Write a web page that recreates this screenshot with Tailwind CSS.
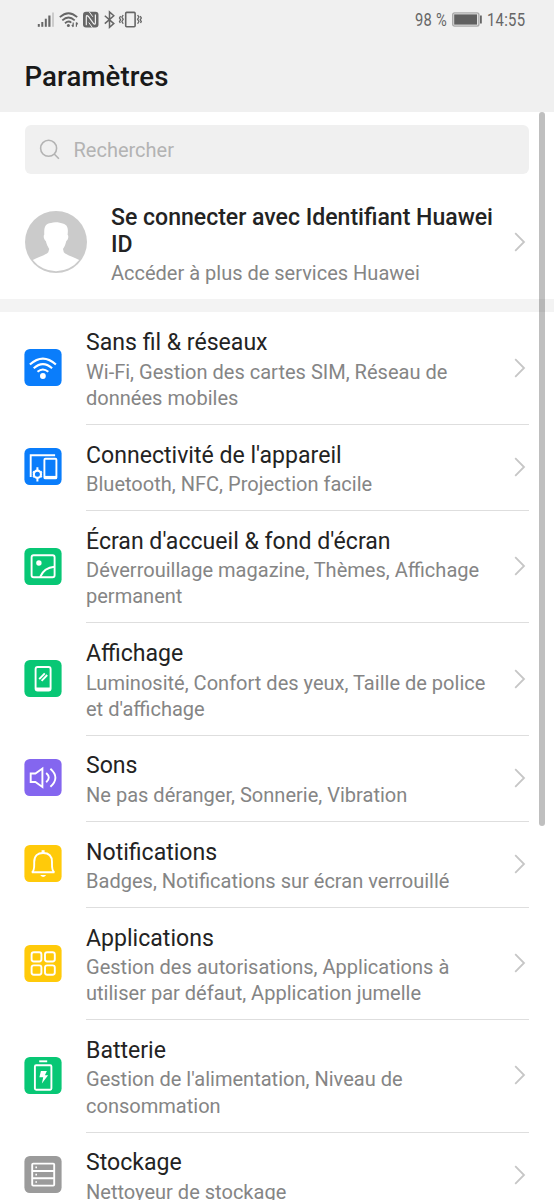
<!DOCTYPE html>
<html lang="fr">
<head>
<meta charset="utf-8">
<title>Paramètres</title>
<script src="https://cdn.jsdelivr.net/npm/@tailwindcss/browser@4"></script>
</head>
<body class="bg-white">
<svg class="hidden"><defs><symbol id="chev" viewBox="0 0 12 20"><path d="M1.2 1.2 10 10 1.2 18.8" fill="none" stroke="#c6c6c6" stroke-width="1.8"/></symbol></defs></svg>
<div class="relative flex h-[1200px] w-[554px] flex-col overflow-hidden bg-white font-[Roboto,sans-serif] text-[#232323]">
  <header class="h-[112px] shrink-0 bg-[#f0f0f0]">
    <div class="flex h-[39px] items-center justify-between pr-[29px] pl-[37px] text-[#666]">
      <svg class="h-[20px] w-[106px]" viewBox="0 0 106 20" fill="none" stroke="#666">
        <g fill="#666" stroke="none"><rect x="0.8" y="14" width="2" height="2.8"/><rect x="4.3" y="12" width="2" height="4.8"/><rect x="7.8" y="8.7" width="2" height="8.1"/><rect x="11.3" y="5.5" width="2.2" height="11.3"/><rect x="15" y="2.5" width="2" height="14.3" fill="#ccc"/></g>
        <g stroke-width="1.8"><path d="M22.8 7.2Q31.5 -.8 40.2 7.2M25.3 10.3Q31.5 4.7 37.7 10.3M28 13.2Q31.5 10.2 34.3 12.6"/></g>
        <circle cx="31.4" cy="15.6" r="1.5" fill="#666" stroke="none"/>
        <path d="M36.2 12.4v4.4M34.9 14.9l1.3 1.9M39.4 16.8v-4.4M40.7 14.3l-1.3-1.9" stroke-width="1.2"/>
        <rect x="46" y="1.8" width="15.5" height="15.8" rx="3" fill="#666" stroke="none"/>
        <path d="M49.3 15.2V7q0-2.5 2.1-.5l5.2 7q1.8 1.7 1.8-.8V4.6" stroke="#f0f0f0" stroke-width="1.2"/>
        <path d="M52.2 1.8l3.6 5M55.4 17.6l-3.6-5" stroke="#f0f0f0" stroke-width="1"/>
        <path d="M67.8 5.8 76.8 13.6 72.5 17.3V1.9L76.8 5.8 67.8 13.6" stroke-width="1.5"/>
        <rect x="88.7" y="2.4" width="9.4" height="14.4" rx="1" stroke-width="1.6"/>
        <path d="M86.2 5 84.9 7.1 86.2 9.3 84.9 11.5 86.2 13.8M100.6 5l1.3 2.1-1.3 2.2 1.3 2.2-1.3 2.3M83.6 6.2l-1.1 1.8 1.1 1.8-1.1 1.8.8 1.4M103.2 6.2l1.1 1.8-1.1 1.8 1.1 1.8-.8 1.4" stroke-width="1.3"/>
      </svg>
      <div class="flex items-center text-[17.5px] leading-5">
        <span id="pct" class="inline-block w-[33px] origin-left scale-x-[.84] whitespace-nowrap tracking-[0.3px]">98 %</span>
        <svg class="ml-[4px] h-[15px] w-[31px]" viewBox="0 0 31 15"><rect x=".7" y=".9" width="26.2" height="13.2" rx="1.8" fill="#e0e0e0" stroke="#aaa" stroke-width="1.4"/><rect x="2.2" y="2.4" width="22.8" height="10.2" fill="#606060"/><rect x="28" y="3.5" width="1.8" height="8" fill="#666"/></svg>
        <span id="clk" class="ml-[4px] inline-block w-[38px] origin-left scale-x-[.85] whitespace-nowrap tracking-[0.3px]">14:55</span>
      </div>
    </div>
    <h1 class="pt-[20px] pl-[24.5px] text-[27.6px] leading-9 font-medium tracking-[0.1px] text-[#191919]"><span>Paramètres</span></h1>
  </header>
  <div class="h-[187px] shrink-0 pr-[25px] pl-[24.5px] pt-[12.5px]">
    <div class="flex h-[49px] items-center rounded-[6px] bg-[#f0f0f0] pl-[14px] text-[20px] text-[#b3b3b3]">
      <svg class="mr-[14px] h-[21px] w-[21px]" viewBox="0 0 21 21" fill="none" stroke="#b3b3b3" stroke-width="1.6"><circle cx="9.6" cy="9.3" r="8"/><path d="m15.2 15 4.7 4.7"/></svg>
      <span class="pt-[1px]">Rechercher</span>
    </div>
    <div class="flex h-[125px] items-center pt-[12px]">
      <svg class="h-[62px] w-[62px] shrink-0" viewBox="0 0 62 62"><circle cx="31" cy="31" r="31" fill="#cbcbcb"/><path d="M7.8 49C14 45.5 20 44.5 23.3 41.2L24.2 38C23 36 21.5 33 20.8 30 19 29 18 25 19.3 23.6 18.8 16 20.5 12.5 26 12 29 10.7 35 11.2 38.5 12.8 43 14.5 43.3 18 42.6 23.8 44 25 43.2 29 41.3 30 40.6 33 39.5 36 38 38L38.8 41.2C42 44.5 48 45.5 54.2 49A29.6 29.6 0 0 1 7.8 49Z" fill="#fff"/></svg>
      <div class="ml-[24.5px] flex-1 pt-[6px]">
        <div class="text-[23.05px] leading-[27px] font-medium whitespace-nowrap"><span>Se connecter avec Identifiant Huawei</span><br>ID</div>
        <div class="pt-[2px] text-[20px] leading-[26px] text-[#858585]"><span>Accéder à plus de services Huawei</span></div>
      </div>
      <svg class="mr-[3px] h-[20px] w-[12px]"><use href="#chev"/></svg>
    </div>
  </div>
  <div class="h-[13px] shrink-0 bg-[#f3f3f3]"></div>
  <main id="list" class="shrink-0 pt-[0.6px] pr-[25px] pl-[24px]"></main>
  <div class="absolute top-[112px] left-[539px] h-[714px] w-[6px] rounded-full bg-black/25"></div>
</div>
<script>
const rows = [
  ['#0a7dfb', "Sans fil & réseaux", ["Wi-Fi, Gestion des cartes SIM, Réseau de", "données mobiles"],
   '<path d="M5.5 15.6Q18.5 3.6 31.5 15.6M9.3 19.2Q18.5 11 27.7 19.2M13.1 22.8Q18.5 18.2 23.9 22.8" stroke-width="2.1"/><circle cx="18.5" cy="27" r="2.9" fill="#fff" stroke="none"/>'],
  ['#0a7dfb', "Connectivité de l'appareil", ["Bluetooth, NFC, Projection facile"],
   '<path d="M6.3 29V7.2h24.4"/><rect x="20" y="10.8" width="12" height="19.6" rx="1"/><path d="M20 29.4h12" stroke-width="3"/><circle cx="13" cy="26.3" r="3.6" stroke-width="2.2"/><path d="M13 19.2v3.4M13 30v3.4M9.4 24.2l-.9-.5M9.4 28.4l-.9.5M16.6 24.2l.9-.5M16.6 28.4l.9.5" stroke-width="2"/>'],
  ['#08c775', "Écran d'accueil & fond d'écran", ["Déverrouillage magazine, Thèmes, Affichage", "permanent"],
   '<rect x="7.2" y="7.2" width="23" height="22" rx="2"/><circle cx="14.5" cy="15" r="2.7" fill="#fff" stroke="none"/><path d="M15.7 29C18.4 22.8 22.6 19.4 30 18.8"/>'],
  ['#08c775', "Affichage", ["Luminosité, Confort des yeux, Taille de police", "et d'affichage"],
   '<rect x="11.2" y="7" width="15" height="23.5" rx="2"/><path d="M11.4 29h14.6" stroke-width="3"/><path d="m14.8 19.2 5.6-5.8M17.2 20.8l5.6-5.8"/>'],
  ['#8466ef', "Sons", ["Ne pas déranger, Sonnerie, Vibration"],
   '<path d="M6.3 14.5H11L18 9.5V28L11 23H6.3Z"/><path d="M21.8 14Q27 18.6 21.8 23.2M26 9.7Q36 18.6 26 27.8"/>'],
  ['#ffca0a', "Notifications", ["Badges, Notifications sur écran verrouillé"],
   '<path d="M7.5 27.3C10.4 25.7 9.8 20 9.8 17 9.8 10.8 13.2 8 18.7 8S27.6 10.8 27.6 17C27.6 20 27 25.7 30 27.3Z"/><path d="M18.7 5.2V8" stroke-width="3"/><path d="M15.8 30h6Q18.8 34 15.8 30Z" fill="#fff" stroke="none"/>'],
  ['#ffca0a', "Applications", ["Gestion des autorisations, Applications à", "utiliser par défaut, Application jumelle"],
   '<rect x="7.2" y="7.2" width="9.8" height="9.3" rx="2.2"/><rect x="20.6" y="7.2" width="9.8" height="9.3" rx="2.2"/><rect x="7.2" y="20.4" width="9.8" height="9.3" rx="2.2"/><rect x="20.6" y="20.4" width="9.8" height="9.3" rx="2.2"/>'],
  ['#08c775', "Batterie", ["Gestion de l'alimentation, Niveau de", "consommation"],
   '<rect x="10.5" y="8.2" width="16.5" height="24.6" rx="1.2"/><path d="M14.8 4.3h8"/><path d="M16.5 14h6l-2 4.2h3.2l-6.2 8.3 1.3-6.2h-3.8Z" fill="#fff" stroke="none"/>'],
  ['#9b9b9b', "Stockage", ["Nettoyeur de stockage"],
   '<rect x="7.8" y="7.6" width="22" height="22" rx="1"/><path d="M8 15h21.5M8 22.3h21.5"/><path d="M11 11.3h1.6M11 18.6h1.6M11 26h1.6" stroke-width="1.7"/>']
];
const esc = s => s.replace(/&/g, '&amp;');
document.getElementById('list').innerHTML = rows.map(([c, t, s, icon]) => `
  <section class="flex items-stretch ${s.length > 1 ? 'h-[112.3px]' : 'h-[86.2px]'}">
    <div class="flex w-[62px] shrink-0 items-center pb-[2.2px]"><svg class="h-[37px] w-[38px]" viewBox="-.4 0 38 37" fill="none" stroke="#fff" stroke-width="1.9"><rect width="37.2" height="37" rx="5.5" fill="${c}" stroke="none"/>${icon}</svg></div>
    <div class="flex flex-1 items-center justify-between border-b border-[#dedede]">
      <div class="pt-[3px] whitespace-nowrap"><div class="text-[23.08px] leading-[29px]"><span>${esc(t)}</span></div><div class="pt-[1.4px] text-[20.05px] leading-[26.2px] text-[#858585]">${s.map(x => `<span>${x}</span>`).join('<br>')}</div></div>
      <svg class="mr-[3px] mb-[1px] h-[20px] w-[12px] shrink-0"><use href="#chev"/></svg>
    </div>
  </section>`).join('');
</script>
</body>
</html>
